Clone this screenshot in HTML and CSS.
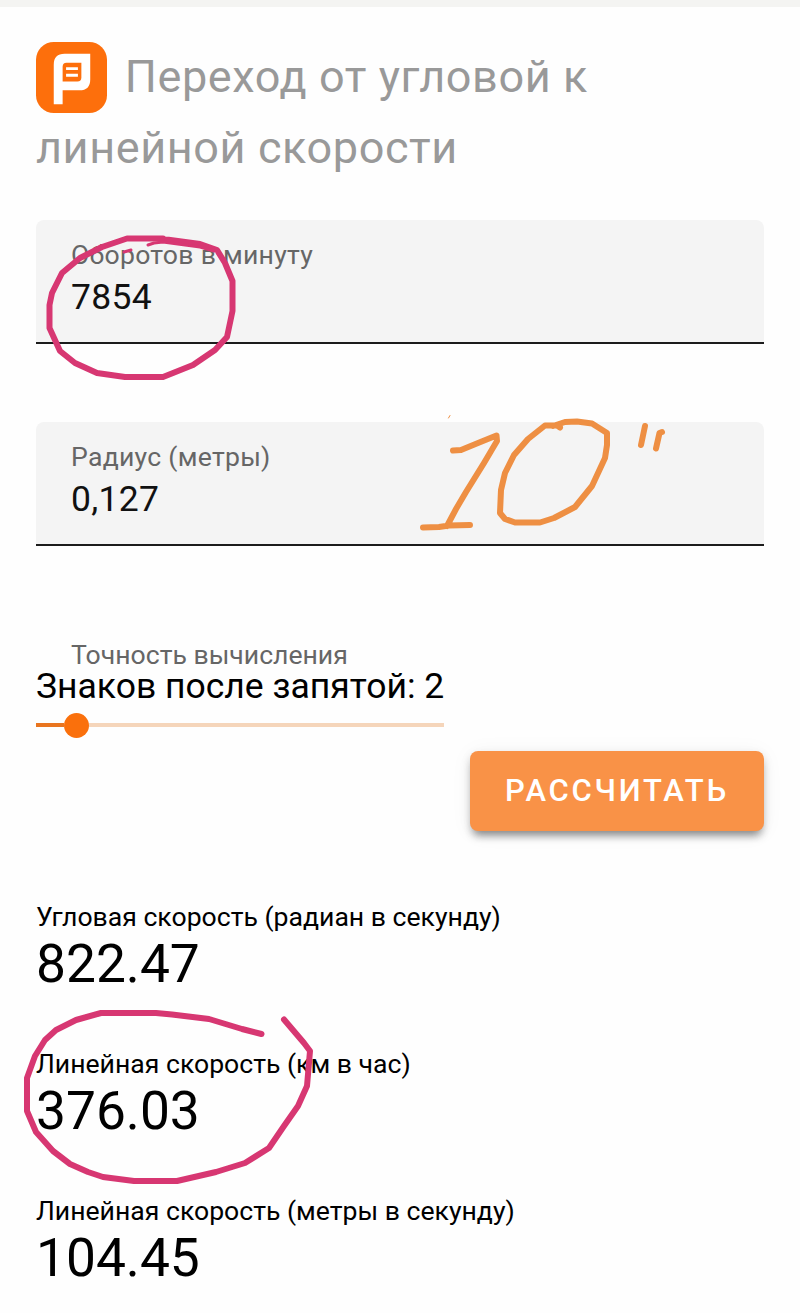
FILE: index.html
```html
<!DOCTYPE html>
<html lang="ru">

<head>
  <meta charset="UTF-8">
  <meta name="viewport" content="width=device-width, initial-scale=1.0">
  <title>Переход от угловой к линейной скорости</title>
  <link rel="stylesheet" href="styles.css">
</head>

<body>
  <main class="page">
    <h1 class="title">
      <svg class="logo" viewBox="0 0 72 72">
        <rect width="72" height="72" rx="18" fill="#fd6f0c" />
        <path d="M18 63V23q0-11 11-11h26v26q0 11-11 11H27v14z" fill="#fff" />
        <path d="M27 40V25q0-4 4-4h15v15q0 4-4 4z" fill="#fd6f0c" />
        <path d="M30.500 27h12M30.500 33.700h12" stroke="#fff" stroke-width="3" />
      </svg>
      Переход от угловой к линейной скорости
    </h1>

    <label class="field">
      <span class="field-label">Оборотов в минуту</span>
      <input class="field-input" type="text" value="7854">
    </label>

    <label class="field">
      <span class="field-label">Радиус (метры)</span>
      <input class="field-input" type="text" value="0,127">
    </label>

    <div class="precision">
      <div class="precision-label">Точность вычисления</div>
      <div class="precision-value">Знаков после запятой: 2</div>
      <div class="slider">
        <div class="slider-fill"></div>
        <div class="slider-thumb"></div>
        <div class="slider-track"></div>
      </div>
    </div>

    <button class="calculate" type="button">Рассчитать</button>

    <div class="result">
      <div class="result-label">Угловая скорость (радиан в секунду)</div>
      <div class="result-value">822.47</div>
    </div>
    <div class="result">
      <div class="result-label">Линейная скорость (км в час)</div>
      <div class="result-value">376.03</div>
    </div>
    <div class="result">
      <div class="result-label">Линейная скорость (метры в секунду)</div>
      <div class="result-value">104.45</div>
    </div>
  </main>

  <!-- hand-drawn marks over the form -->
  <svg class="marks" width="800" height="1313" viewBox="0 0 800 1313">
    <g class="pink">
      <path d="M163 238.500H127L102 247 80 258 62 273 52 293 49.500 305V328L60 351 75 363 97 373 125 377H163L193 365 215 350 227 337 232.500 311V281L225 263 217 250 200 244 163 239" />
      <path class="smear" d="M148 245L154 243 163 242 200 247 214 251M124 252L131 250" />
      <path d="M261.500 1034L242 1029 209 1019 172 1014.500 156 1013H101L76 1020 56 1030 45 1040 35 1056 27 1078V1111L36 1132 53 1151 70 1164 88 1172 103 1177 134 1181H177L216 1172 245 1163 269 1148 284 1126 298 1106 307 1086 310 1051 304 1043 284 1019.500" />
    </g>
    <g class="orange">
      <path d="M453 450.500L461 450 478 443 496.500 435.500 497 441 484 463 466 492 456 509 447 526M423 527.500L439 527 449 525.500 470 525" />
      <path d="M560 427.500L557 425.500 545 425.500 528 439 514 455 505 473 501 490 500 513 505 519 515 522.500 540 522.500 554 518 575 507 592 486 605 458 607 445V433L592 423.500 577 421.500 565 422 553 426" />
      <path d="M645 426L641 445M662 432L659.500 433 656 448.500" />
      <path class="speck" d="M448.500 418L450 415.500" />
    </g>
  </svg>
</body>

</html>
```
FILE: styles.css
```css
* {
  box-sizing: border-box;
}

body {
  margin: 0;
  position: relative;
  height: 1313px;
  overflow: hidden;
  background-color: #fefefe;
  border-top: 7px solid #f4f4f2;
  font-family: Roboto, sans-serif;
  color: #000;
}

.page {
  display: flex;
  flex-direction: column;
  padding: 34px 36px 0;
}

.title {
  margin: 0 0 37px;
  font-size: 45px;
  line-height: 71px;
  font-weight: 400;
  letter-spacing: 0.6px;
  color: #999;
}

.logo {
  width: 71px;
  height: 71px;
  margin: -4px 6px -4px 0;
  vertical-align: -17px;
}

.field {
  display: flex;
  flex-direction: column;
  height: 124px;
  margin-bottom: 78px;
  padding: 20px 35px 0;
  background-color: #f4f4f4;
  border-bottom: 2px solid #1c1c1c;
  border-radius: 8px 8px 0 0;
}

.field-label {
  font-size: 26.6px;
  line-height: 30px;
  letter-spacing: 0.27px;
  color: #666;
}

.field-input {
  width: 100%;
  height: 44px;
  margin-top: 5px;
  padding: 0;
  border: 0;
  background: none;
  font: 35.5px Roboto, sans-serif;
  letter-spacing: 0.3px;
  color: #111;
}

.precision {
  align-self: flex-start;
  margin-top: 16px;
}

.precision-label {
  padding-left: 35px;
  font-size: 26.6px;
  line-height: 30px;
  color: #666;
}

.precision-value {
  font-size: 35.5px;
  line-height: 32px;
}

.slider {
  display: flex;
  align-items: center;
  height: 26px;
  margin-top: 10px;
}

.slider-fill {
  width: 28px;
  height: 4px;
  background-color: #e9751f;
}

.slider-thumb {
  width: 25px;
  height: 25px;
  border-radius: 50%;
  background-color: #fa700c;
}

.slider-track {
  flex: 1;
  height: 4px;
  background-color: #f5d5ba;
}

.calculate {
  align-self: flex-end;
  width: 294px;
  height: 80px;
  margin: 13px 0 70px;
  padding: 0 0 2px;
  border: 0;
  border-radius: 8px;
  background-color: #f99247;
  box-shadow: 0 8px 9px -4px rgba(0, 0, 0, 0.38), 0 4px 10px rgba(0, 0, 0, 0.14), 0 2px 22px rgba(0, 0, 0, 0.05);
  font: 500 31px Roboto, sans-serif;
  letter-spacing: 2.8px;
  text-transform: uppercase;
  color: #fff;
}

.result {
  height: 147px;
}

.result-label {
  font-size: 26.6px;
  line-height: 32px;
}

.result-value {
  font-size: 53.3px;
  line-height: 62px;
}

.marks {
  position: absolute;
  top: -7px;
  left: 0;
  fill: none;
  stroke-linecap: round;
  stroke-linejoin: round;
}

.pink {
  stroke: #d73772;
  stroke-width: 6;
}

.pink .smear {
  stroke-width: 3;
}

.orange {
  stroke: #ee8f43;
  stroke-width: 6;
}

.orange .speck {
  stroke-width: 1;
}
```
